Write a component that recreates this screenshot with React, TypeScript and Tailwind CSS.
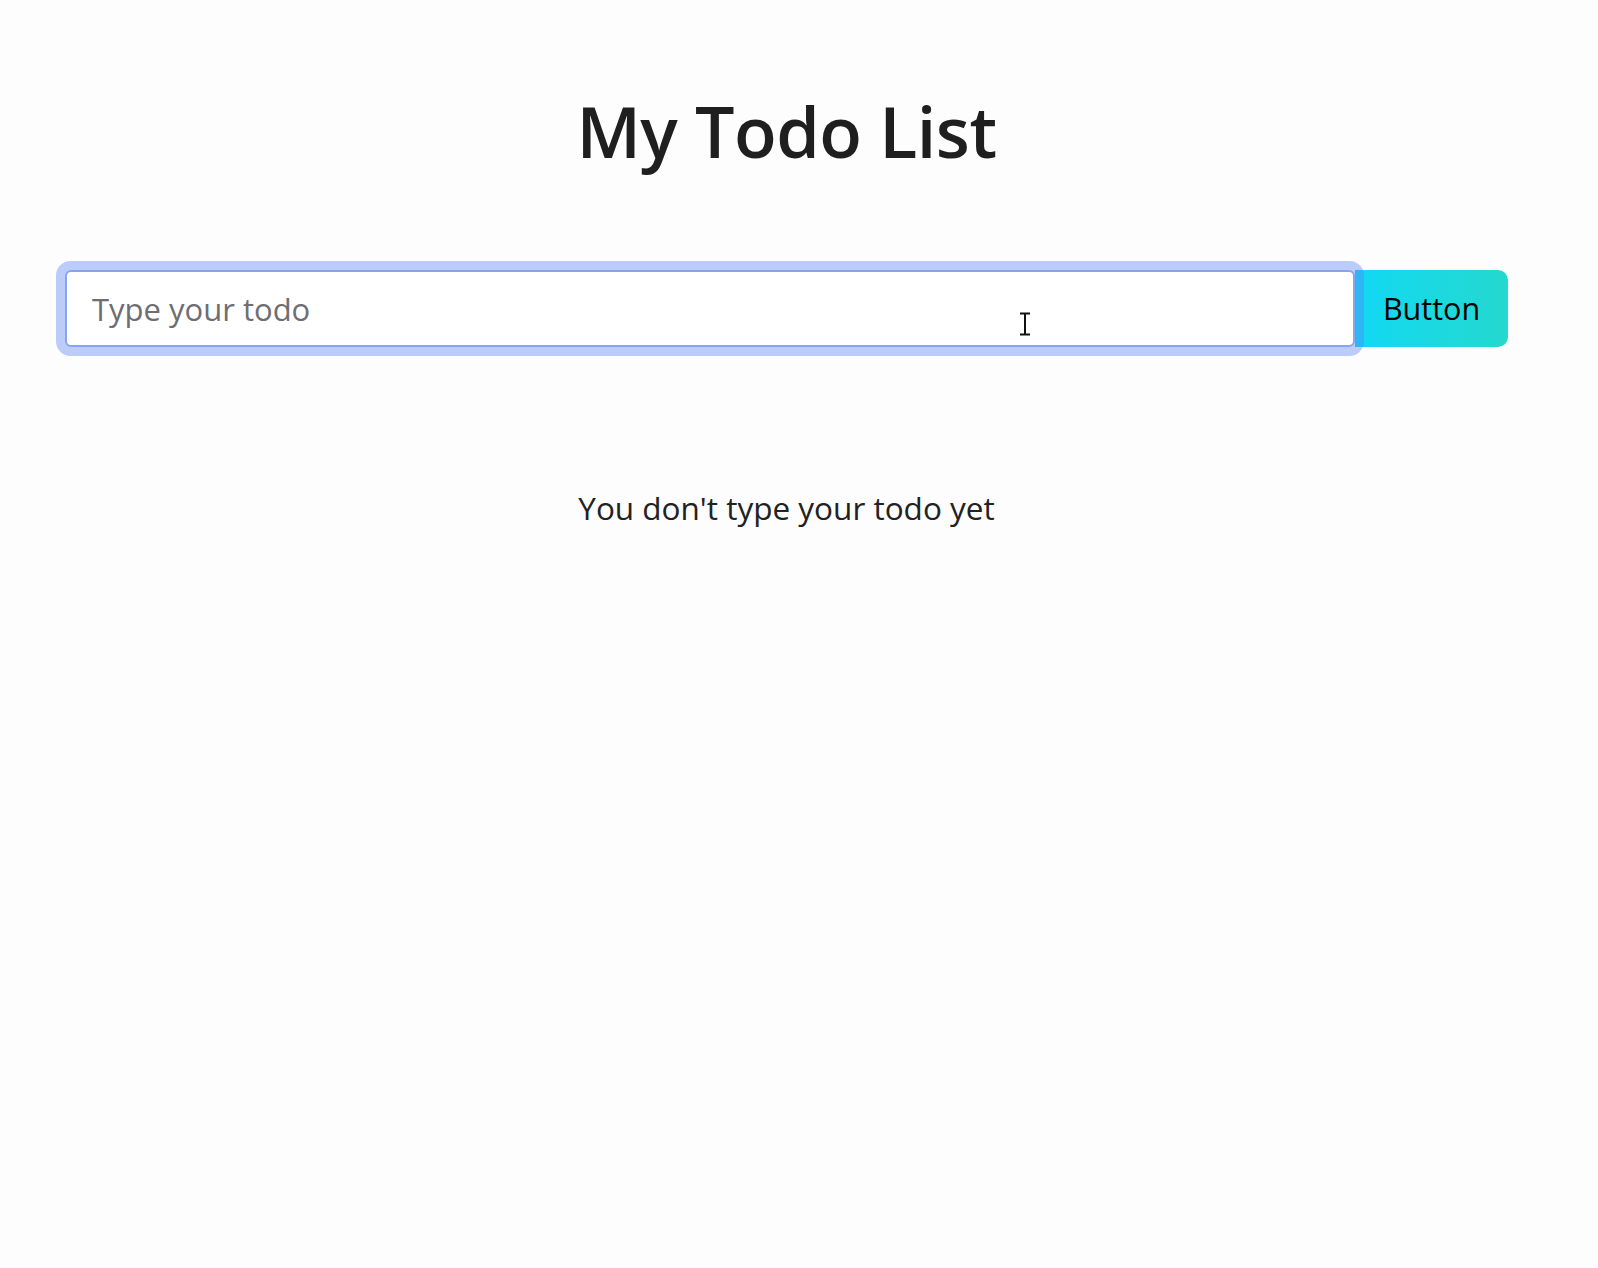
import React from "react";

export default function App() {
  return (
    <div
      className="min-h-[1268px] w-full bg-[#fdfdfe] text-[#1f1f1f] relative"
      style={{ fontFamily: '"Open Sans", "Noto Sans", Arial, sans-serif' }}
    >
      <div className="pl-[65px] pr-[90px] pt-[96px] flex flex-col">
        <h1 className="text-center text-[70px] leading-[70px] font-semibold tracking-[-0.5px] text-[#1f1f1f]">
          My Todo List
        </h1>
        <div className="mt-[104px] flex">
          <input
            type="text"
            placeholder="Type your todo"
            className="relative z-10 flex-1 h-[77px] rounded-[6px] border-2 border-[#8aa3f0] bg-white px-[25px] text-[31px] text-[#1f1f1f] placeholder:text-[#6e6e72] outline-none ring-[9px] ring-[#5782f5]/40"
          />
          <button className="h-[77px] w-[153px] rounded-r-[10px] bg-gradient-to-r from-[#0fd9f3] to-[#25d8cf] text-[30.5px] text-black">
            Button
          </button>
        </div>
        <p className="mt-[142px] text-center text-[31.5px] leading-[38px] text-[#222]">
          You don't type your todo yet
        </p>
      </div>
      <svg
        className="absolute left-[1019px] top-[312px] z-20"
        width="12"
        height="24"
        viewBox="0 0 12 24"
      >
        <path d="M1 1.5h10M1 22.5h10M6 1.5v21" stroke="#111" strokeWidth="2" fill="none" />
      </svg>
    </div>
  );
}
